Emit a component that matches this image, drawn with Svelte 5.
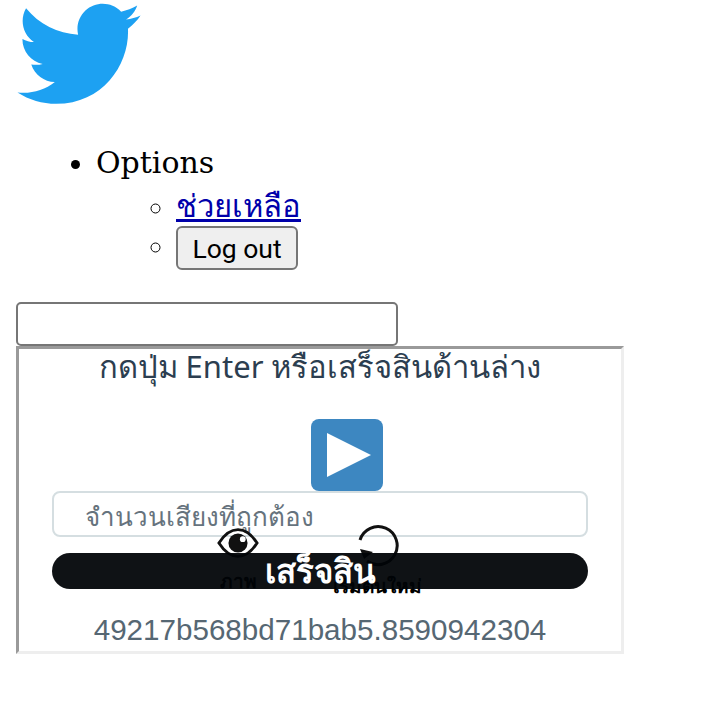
<script>
    let options = [{label: "ช่วยเหลือ", href: "#help"}];
</script>

<svg class="logo" viewBox="0 0 248 204" aria-label="Twitter">
    <path fill="#1da1f2" d="M221.95 51.29c.15 2.17.15 4.34.15 6.53 0 66.73-50.8 143.69-143.69 143.69v-.04c-27.44.04-54.31-7.82-77.41-22.64 3.99.48 8 .72 12.02.73 22.74.02 44.83-7.61 62.72-21.66-21.61-.41-40.56-14.5-47.18-35.07 7.57 1.46 15.37 1.16 22.8-.87-23.56-4.76-40.51-25.46-40.51-49.5v-.64c7.02 3.91 14.88 6.08 22.92 6.32C11.58 63.31 4.74 33.79 18.14 10.71c25.64 31.55 63.47 50.73 104.08 52.76-4.07-17.54 1.49-35.92 14.61-48.25 20.34-19.12 52.33-18.14 71.45 2.19 11.31-2.23 22.15-6.26 32.07-12.2-3.77 11.69-11.66 21.62-22.2 27.93 10.01-1.18 19.79-3.86 29-7.95-6.78 10.16-15.32 19.01-25.2 26.16z"/>
</svg>

<ul class="menu">
    <li>
        Options
        <ul>
            {#each options as option}
                <li class="link"><a href={option.href}>{option.label}</a></li>
            {/each}
            <li><button class="logout">Log out</button></li>
        </ul>
    </li>
</ul>

<input class="search" type="text" />

<div class="box">
    <div class="prompt">กดปุ่ม Enter หรือเสร็จสินด้านล่าง</div>
    <button class="play" aria-label="Play">
        <svg viewBox="0 0 72 72" width="72" height="72"><path fill="#fff" d="M16 14 L60 36 L16 58 Z"/></svg>
    </button>
    <div class="form">
        <input class="count" type="text" placeholder="จำนวนเสียงที่ถูกต้อง" />
        <div class="tool eye">
            <svg viewBox="0 0 44 32" width="42" height="32">
                <path fill="none" stroke="#111" stroke-width="3" d="M2 16 C9 5 15 2 22 2 C29 2 35 5 42 16 C35 27 29 30 22 30 C15 30 9 27 2 16 Z"/>
                <circle cx="22" cy="16" r="10" fill="#111"/>
                <circle cx="27" cy="12" r="3" fill="#fff"/>
            </svg>
            <span>ภาพ</span>
        </div>
        <div class="tool restart">
            <svg viewBox="0 0 44 44" width="44" height="44">
                <path fill="none" stroke="#111" stroke-width="3" d="M4 17 A19 19 0 1 1 11 38"/>
                <path fill="#111" d="M4 26 L17 29 L8 36 Z"/>
            </svg>
            <span>เริ่มต้นใหม่</span>
        </div>
        <button class="done">เสร็จสิน</button>
    </div>
    <div class="hash">49217b568bd71bab5.8590942304</div>
</div>

<style>
    :global(body) {
        margin: 0;
        padding: 0 16px;
        background: #fff;
        font-family: "DejaVu Serif", "Liberation Serif", serif;
    }
    .logo {
        display: block;
        width: 124px;
        height: 102px;
        margin: 3px 0 0 1px;
    }
    .menu {
        margin: 36px 0 32px;
        padding-left: 80px;
        font-size: 30px;
        line-height: 44px;
    }
    .menu ul {
        margin: 0;
        padding-left: 80px;
        list-style: circle;
    }
    .link {
        height: 39px;
        line-height: 40px;
    }
    .menu a {
        color: #0000aa;
        font-family: "Noto Sans", sans-serif;
        font-size: 31px;
    }
    .logout {
        width: 122px;
        height: 44px;
        padding: 0;
        background: #efefef;
        border: 2px solid #767676;
        border-radius: 6px;
        color: #000;
        font: 26.5px Roboto, sans-serif;
        vertical-align: middle;
    }
    .search {
        display: block;
        box-sizing: border-box;
        width: 382px;
        height: 44px;
        border: 2px solid #767676;
        border-radius: 5px;
    }
    .box {
        box-sizing: border-box;
        width: 608px;
        height: 308px;
        border: 3px solid;
        border-color: #9a9a9a #eee #eee #9a9a9a;
        padding: 0 33px;
        text-align: center;
        font-family: "Noto Sans", sans-serif;
    }
    .prompt {
        margin-top: 1px;
        height: 40px;
        color: #2c3e50;
        font-size: 31px;
        line-height: 32px;
    }
    .play {
        display: block;
        width: 72px;
        height: 72px;
        margin: 29px 0 0 259px;
        padding: 0;
        border: 0;
        border-radius: 8px;
        background: #3d87c1;
    }
    .play svg {
        display: block;
    }
    .form {
        position: relative;
        display: flex;
        flex-direction: column;
        gap: 16px;
    }
    .count {
        box-sizing: border-box;
        width: 100%;
        height: 46px;
        padding: 3px 31px 0;
        border: 2px solid #d5dee1;
        border-radius: 8px;
        font: 26px "Noto Sans", sans-serif;
    }
    .count::placeholder {
        color: #66737d;
    }
    .tool {
        position: absolute;
        display: flex;
        flex-direction: column;
        align-items: center;
        color: #000;
        font-size: 19px;
        font-weight: 700;
        line-height: 24px;
    }
    .tool span {
        white-space: nowrap;
    }
    .eye {
        left: 165px;
        top: 36px;
    }
    .eye span {
        margin-top: 10px;
    }
    .restart {
        left: 281px;
        top: 32px;
    }
    .restart span {
        margin-top: 7px;
    }
    .done {
        position: relative;
        height: 36px;
        padding: 0;
        border: 0;
        border-radius: 18px;
        background: rgba(0, 3, 6, 0.94);
        color: #fff;
        font: 700 33px/36px "Noto Sans", sans-serif;
    }
    .hash {
        margin-top: 21px;
        color: #566773;
        font: 29.6px/40px "Liberation Sans", sans-serif;
    }
</style>
